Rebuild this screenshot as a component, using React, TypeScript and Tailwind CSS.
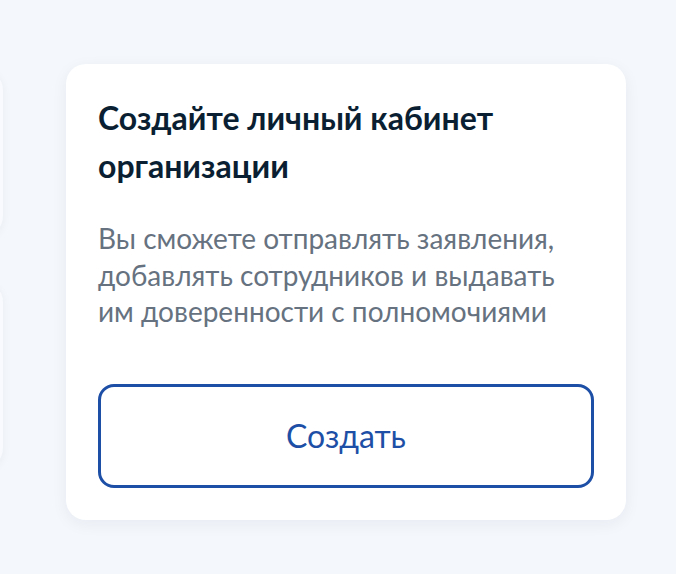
export default function App() {
  return (
    <div
      className="min-h-screen w-full overflow-hidden bg-[#f4f7fb] flex"
      style={{ fontFamily: 'Lato, "Noto Sans", sans-serif' }}
    >
      <div className="flex items-start pt-[64px] gap-[63px] -ml-[300px]">
        <div className="w-[303px] flex flex-col gap-[46px] pt-[6px]">
          <div className="h-[166px] rounded-r-[20px] bg-[#f8fafd] shadow-[0_2px_10px_rgba(30,60,120,0.05)]" />
          <div className="h-[186px] rounded-r-[20px] bg-[#f8fafd] shadow-[0_2px_10px_rgba(30,60,120,0.05)]" />
        </div>
        <div className="w-[560px] rounded-[20px] bg-white px-[32px] pt-[30px] pb-[32px] shadow-[0_4px_16px_rgba(30,60,120,0.06)]">
          <h2 className="text-[32px] leading-[48px] font-bold text-[#0b1f33]">
            Создайте личный кабинет
            <br />
            организации
          </h2>
          <p className="mt-[30px] text-[28px] leading-[36.5px] text-[#66727f]">
            Вы сможете отправлять заявления,
            <br />
            добавлять сотрудников и выдавать
            <br />
            им доверенности с полномочиями
          </p>
          <button className="mt-[54px] w-full h-[104px] rounded-[16px] border-[3px] border-[#1e4fa6] bg-white text-[32px] text-[#1e4fa6]">
            Создать
          </button>
        </div>
      </div>
    </div>
  );
}
